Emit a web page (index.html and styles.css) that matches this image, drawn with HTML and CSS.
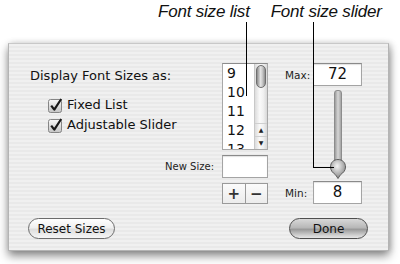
FILE: index.html
```html
<!DOCTYPE html>
<html lang="en">
<head>
  <meta charset="UTF-8">
  <title>Font Sizes</title>
  <link rel="stylesheet" href="styles.css">
</head>
<body>
  <div class="figure">
    <div class="callouts">
      <span class="callout callout-list">Font size list</span>
      <span class="callout callout-slider">Font size slider</span>
    </div>
    <div class="leader leader-list"></div>
    <div class="leader leader-slider"></div>

    <div class="panel">
      <div class="panel-grid">
        <div class="options">
          <p class="options-title">Display Font Sizes as:</p>
          <label class="check">
            <svg class="box" width="16" height="15" viewBox="0 0 16 15">
              <defs>
                <linearGradient id="cb" x1="0" y1="0" x2="0" y2="1">
                  <stop offset="0" stop-color="#fafafa"/>
                  <stop offset="1" stop-color="#c4c4c4"/>
                </linearGradient>
              </defs>
              <rect x="0.5" y="1.5" width="13" height="13" rx="2" fill="url(#cb)" stroke="#858585"/>
              <path d="M3.2 7.6 L6.3 11.6 L13.2 1" fill="none" stroke="#1a1a1a" stroke-width="2.2" stroke-linejoin="round"/>
            </svg>
            Fixed List
          </label>
          <label class="check">
            <svg class="box" width="16" height="15" viewBox="0 0 16 15">
              <rect x="0.5" y="1.5" width="13" height="13" rx="2" fill="url(#cb)" stroke="#858585"/>
              <path d="M3.2 7.6 L6.3 11.6 L13.2 1" fill="none" stroke="#1a1a1a" stroke-width="2.2" stroke-linejoin="round"/>
            </svg>
            Adjustable Slider
          </label>
        </div>

        <div class="size-list">
          <ul class="sizes">
            <li>9</li>
            <li>10</li>
            <li>11</li>
            <li>12</li>
            <li>13</li>
          </ul>
          <div class="scrollbar">
            <div class="thumb"></div>
            <div class="arrow">&#9650;</div>
            <div class="arrow">&#9660;</div>
          </div>
        </div>

        <span class="new-size-label">New Size:</span>
        <div class="field new-size-field"></div>

        <div class="stepper">
          <span class="step">+</span>
          <span class="step">&minus;</span>
        </div>

        <div class="range">
          <div class="range-row">
            <span class="range-label">Max:</span>
            <div class="field num">72</div>
          </div>
          <div class="slider">
            <div class="track"></div>
            <svg class="knob" width="18" height="22" viewBox="0 0 18 22">
              <defs>
                <radialGradient id="kg" cx="0.45" cy="0.35" r="0.7">
                  <stop offset="0" stop-color="#f4f4f4"/>
                  <stop offset="0.55" stop-color="#b4b4b4"/>
                  <stop offset="1" stop-color="#7c7c7c"/>
                </radialGradient>
              </defs>
              <path d="M9 1.5 C4.6 1.5 1.5 4.6 1.5 9 C1.5 12.6 3.8 14.8 6.4 16.6 L9 20.5 L11.6 16.6 C14.2 14.8 16.5 12.6 16.5 9 C16.5 4.6 13.4 1.5 9 1.5 Z" fill="url(#kg)" stroke="#5e5e5e"/>
            </svg>
          </div>
          <div class="range-row">
            <span class="range-label">Min:</span>
            <div class="field num">8</div>
          </div>
        </div>
      </div>

      <div class="panel-buttons">
        <button class="btn btn-reset">Reset Sizes</button>
        <button class="btn btn-default">Done</button>
      </div>
    </div>
  </div>
</body>
</html>
```

FILE: styles.css
```css
body {
  margin: 0;
  background: #fff;
  font-family: 'DejaVu Sans', 'Liberation Sans', sans-serif;
  color: #111;
}
.figure {
  position: relative;
  width: 400px;
  height: 264px;
  overflow: hidden;
}
.callouts {
  height: 43px;
  display: flex;
  align-items: flex-start;
}
.callout {
  font-family: 'Liberation Sans', sans-serif;
  font-style: italic;
  font-size: 17px;
  line-height: 20px;
  padding-top: 2px;
  letter-spacing: -0.2px;
  color: #111;
}
.callout-list {
  margin-left: 158px;
}
.callout-slider {
  margin-left: 21px;
}
.leader {
  position: absolute;
  z-index: 2;
  border-left: 1.5px solid #000;
}
.leader-list {
  left: 246px;
  top: 22px;
  height: 74px;
}
.leader-slider {
  left: 313px;
  top: 22px;
  width: 20px;
  height: 145px;
  border-bottom: 1.5px solid #000;
}
.panel {
  box-sizing: border-box;
  width: 381px;
  height: 208px;
  margin-left: 8px;
  padding: 19px 20px 0 21px;
  border: 1px solid #b4b4b4;
  border-top-color: #c8c8c8;
  background: repeating-linear-gradient(to bottom, #f0f0f0 0, #f0f0f0 2px, #e9e9e9 2px, #e9e9e9 4px);
  box-shadow: 0 5px 9px rgba(0,0,0,0.45), 2px 0 6px rgba(0,0,0,0.15);
}
.panel-grid {
  display: grid;
  grid-template-columns: 184px 46px 86px;
  grid-template-rows: 87px 23px 21px;
  column-gap: 8px;
  row-gap: 5px;
}
.options {
  grid-column: 1;
  grid-row: 1;
  font-size: 13px;
}
.options-title {
  margin: 5px 0 11px;
  line-height: 16px;
}
.check {
  display: flex;
  align-items: center;
  gap: 3px;
  height: 20px;
  margin-left: 18px;
  line-height: 16px;
}
.size-list {
  grid-column: 2;
  grid-row: 1;
  display: flex;
  border: 1px solid #a8a8a8;
  border-top-color: #8c8c8c;
  background: #fff;
  overflow: hidden;
}
.sizes {
  flex: 1;
  margin: 0;
  padding: 0 0 0 4px;
  list-style: none;
  font-size: 14px;
  line-height: 19px;
}
.scrollbar {
  width: 12px;
  display: flex;
  flex-direction: column;
  background: linear-gradient(to right, #dcdcdc, #fafafa 40%, #f0f0f0 70%, #d8d8d8);
  border-left: 1px solid #c8c8c8;
}
.thumb {
  height: 21px;
  margin: 1px 1px 0;
  border-radius: 5px;
  border: 1px solid #6e6e6e;
  background: linear-gradient(to right, #8a8a8a, #e4e4e4 45%, #c4c4c4 70%, #8e8e8e);
}
.arrow {
  height: 12px;
  font-size: 6px;
  line-height: 12px;
  text-align: center;
  color: #222;
  border-top: 1px solid #cfcfcf;
}
.thumb + .arrow {
  margin-top: auto;
}
.new-size-label {
  grid-column: 1;
  grid-row: 2;
  justify-self: end;
  align-self: center;
  font-size: 10px;
  color: #222;
}
.field {
  box-sizing: border-box;
  background: #fff;
  border: 1px solid #a4a4a4;
  border-top-color: #8a8a8a;
  box-shadow: inset 0 1px 1px rgba(0,0,0,0.12);
}
.new-size-field {
  grid-column: 2;
  grid-row: 2;
}
.stepper {
  grid-column: 2;
  grid-row: 3;
  display: flex;
}
.step {
  flex: 1;
  display: flex;
  align-items: center;
  justify-content: center;
  border: 1px solid #9a9a9a;
  background: linear-gradient(#fbfbfb, #ececec);
  font-size: 15px;
  font-weight: bold;
  color: #333;
}
.step + .step {
  border-left: none;
}
.range {
  grid-column: 3;
  grid-row: 1 / 4;
  padding-left: 9px;
  display: flex;
  flex-direction: column;
}
.range-row {
  display: flex;
  align-items: center;
  height: 23px;
}
.range-label {
  font-size: 10.5px;
  color: #222;
}
.num {
  width: 49px;
  height: 23px;
  margin-left: auto;
  text-align: center;
  font-size: 15px;
  line-height: 21px;
}
.slider {
  position: relative;
  flex: 1;
  margin-left: 28px;
  width: 49px;
}
.track {
  width: 6px;
  height: 80px;
  margin: 4px auto 0;
  border-radius: 3px;
  border: 1px solid #8c8c8c;
  background: linear-gradient(to right, #9c9c9c, #d6d6d6 50%, #a4a4a4);
}
.knob {
  position: absolute;
  left: 16px;
  top: 72px;
}
.panel-buttons {
  display: flex;
  justify-content: space-between;
  margin: 14px 0 0 -2px;
}
.btn {
  height: 21px;
  padding: 0;
  border-radius: 11px;
  border: 1px solid #6c6c6c;
  background: linear-gradient(#ffffff, #f0f0f0 45%, #dedede 55%, #f6f6f6);
  font-family: 'DejaVu Sans', sans-serif;
  font-size: 12px;
  color: #111;
}
.btn-reset {
  width: 87px;
}
.btn-default {
  width: 79px;
  border-color: #4e4e4e;
  background: linear-gradient(#d8d8d8, #b8b8b8 45%, #9a9a9a 55%, #cfcfcf 85%, #e6e6e6);
}
```
